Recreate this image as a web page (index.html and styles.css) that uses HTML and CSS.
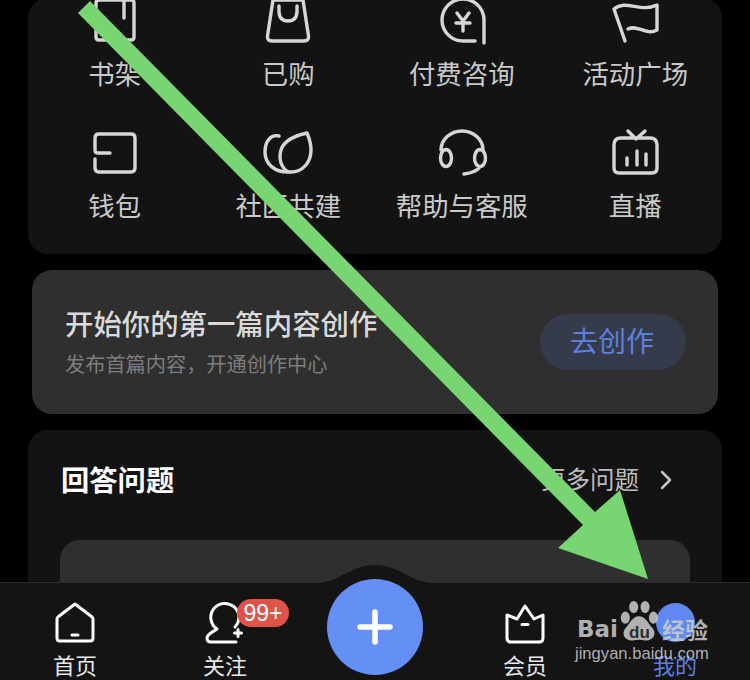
FILE: index.html
```html
<!DOCTYPE html>
<html lang="zh-CN">
<head>
  <meta charset="UTF-8" />
  <title>我的</title>
  <link rel="stylesheet" href="styles.css">
</head>
<body>
  <div class="screen">
    <div class="content">

      <!-- 常用功能 -->
      <section class="card tools">
        <div class="tool">
          <svg class="icon" viewBox="0 0 50 44"><path d="M33 2H9Q6 2 6 5V39Q6 42 9 42H41Q44 42 44 39V5Q44 2 41 2H34M34 3V20"/></svg>
          <span>书架</span>
        </div>
        <div class="tool">
          <svg class="icon" viewBox="0 0 50 44"><path d="M10 2H40L45.500 38Q46 43 41 43H9Q4 43 4.500 38ZM16 8V13Q16 23 25 23Q34 23 34 13V8"/></svg>
          <span>已购</span>
        </div>
        <div class="tool">
          <svg class="icon" viewBox="0 0 50 44"><path d="M38 43H26A21 21 0 1 1 47 22V45M20 15L26 23L32 15M19 25H33M26 23V33"/></svg>
          <span>付费咨询</span>
        </div>
        <div class="tool">
          <svg class="icon" viewBox="0 0 50 44"><path d="M15 43L4 11C16 1 30 15 47 7V32C36 38 28 26 18 31"/></svg>
          <span>活动广场</span>
        </div>
        <div class="tool">
          <svg class="icon" viewBox="0 0 50 44"><path d="M20 23H8Q5 23 5 20V8Q5 4 9 4H41Q45 4 45 8V38Q45 42 41 42H9Q5 42 5 38V29"/></svg>
          <span>钱包</span>
        </div>
        <div class="tool">
          <svg class="icon" viewBox="0 0 50 44"><path d="M16 6C8 4 2 11 2 22C2 34 12 43 27 42M44 3C30 6 17 12 17 26C17 35 22 42 28 42C40 42 48 32 48 20C48 12 46 8 44 3Z"/></svg>
          <span>社区共建</span>
        </div>
        <div class="tool">
          <svg class="icon" viewBox="0 0 50 44"><path d="M4 20A21 19 0 0 1 46 20M9 19.500A5.500 8.500 0 0 0 9 36.500A5.500 8.500 0 0 0 9 19.500ZM43 19.500A5.500 8.500 0 0 0 43 36.500A5.500 8.500 0 0 0 43 19.500ZM43 37C40 41 35 43 27 44"/></svg>
          <span>帮助与客服</span>
        </div>
        <div class="tool">
          <svg class="icon" viewBox="0 0 50 44"><path d="M18 1L26 9L35 1M11 8H40Q47 8 47 15V38Q47 43 42 43H9Q4 43 4 38V15Q4 8 11 8ZM17 28V35M27 21V35M36 24V35"/></svg>
          <span>直播</span>
        </div>
      </section>

      <!-- 创作引导 -->
      <section class="banner">
        <div class="banner-text">
          <h3>开始你的第一篇内容创作</h3>
          <p>发布首篇内容，开通创作中心</p>
        </div>
        <button class="go-btn">去创作</button>
      </section>

      <!-- 回答问题 -->
      <section class="card answers">
        <div class="answers-head">
          <h2>回答问题</h2>
          <div class="more">
            <span>更多问题</span>
            <svg class="chevron" viewBox="0 0 12 20"><path d="M2 2L10 10L2 18"/></svg>
          </div>
        </div>
        <div class="question"></div>
      </section>
    </div>

    <!-- 底部导航 -->
    <nav class="tabbar">
      <svg class="tab-bump" viewBox="0 0 120 18"><path d="M0 18C25 18 35 0 60 0C85 0 95 18 120 18Z"/></svg>
      <div class="tab">
        <svg class="tab-icon" viewBox="0 0 44 44"><path d="M22 4L38.500 16.500Q40 17.500 40 19V38Q40 41 37 41H7Q4 41 4 38V19Q4 17.500 5.500 16.500ZM19 35H25"/></svg>
        <span>首页</span>
      </div>
      <div class="tab">
        <svg class="tab-icon" viewBox="0 0 44 44"><path d="M14 29A14 14 0 1 1 32 27M14 29C10 32 4 34 4 38Q4 42 8 42H33M35 29.500V36.500M31.500 33H38.500"/></svg>
        <span class="badge">99+</span>
        <span>关注</span>
      </div>
      <div class="tab tab-add">
        <div class="fab">
          <svg viewBox="0 0 36 36"><path d="M18 3V33M3 18H33"/></svg>
        </div>
      </div>
      <div class="tab">
        <svg class="tab-icon" viewBox="0 0 44 44"><path d="M4 15L14 19L22 6L31 19L40 15V38Q40 42 36 42H8Q4 42 4 38ZM19 24.500H25"/></svg>
        <span>会员</span>
      </div>
      <div class="tab tab-active">
        <div class="me-dot"></div>
        <span>我的</span>
      </div>
    </nav>

    <!-- 标注箭头 -->
    <svg class="arrow" viewBox="0 0 750 680"><polygon points="90,1 595,512 620,490 648,579 558,548 583,525 78,13"/></svg>

    <!-- 水印 -->
    <div class="watermark">
      <div class="wm-logo">
        <span class="wm-bai">Bai</span>
        <svg class="wm-paw" viewBox="0 0 50 54">
          <ellipse cx="7" cy="22" rx="6" ry="8"/>
          <ellipse cx="18" cy="8" rx="6" ry="8"/>
          <ellipse cx="33" cy="8" rx="6" ry="8"/>
          <ellipse cx="44" cy="22" rx="6" ry="8"/>
          <path d="M25 20C34 20 37 30 43 36C49 44 43 53 33 52Q25 50 17 52C7 53 1 44 7 36C13 30 16 20 25 20Z"/>
        </svg>
        <span class="wm-du">du</span>
        <span class="wm-jy">经验</span>
      </div>
      <div class="wm-url">jingyan.baidu.com</div>
    </div>
  </div>
</body>
</html>
```

FILE: styles.css
```css
* {
  box-sizing: border-box;
}

body {
  margin: 0;
  background: #000;
  font-family: "Noto Sans CJK SC", "Liberation Sans", sans-serif;
}

.screen {
  position: relative;
  width: 750px;
  height: 680px;
  display: flex;
  flex-direction: column;
  overflow: hidden;
}

.content {
  flex: 1;
  min-height: 0;
  overflow: hidden;
  padding: 0 28px;
}

.card {
  background: #131313;
  border-radius: 20px;
}

/* tools */
.tools {
  margin-top: -2px;
  padding-bottom: 29px;
  display: grid;
  grid-template-columns: repeat(4, 1fr);
  row-gap: 37px;
}

.tool {
  display: flex;
  flex-direction: column;
  align-items: center;
  gap: 11px;
  color: #c9c9c9;
  font-size: 26.400px;
  line-height: 40px;
}

.icon {
  width: 50px;
  height: 44px;
  overflow: visible;
  fill: none;
  stroke: #d6d6d6;
  stroke-width: 3.400;
  stroke-linecap: round;
  stroke-linejoin: round;
}

/* banner */
.banner {
  margin: 16px 4px;
  height: 144px;
  padding: 0 32px;
  background: #2f2f2f;
  border-radius: 20px;
  display: flex;
  align-items: center;
  justify-content: space-between;
}

.banner-text {
  padding: 0 0 2px 1px;
}

.banner h3 {
  margin: 0 0 8px;
  color: #d9d9d9;
  font-size: 28.400px;
  font-weight: 500;
  line-height: 38px;
}

.banner p {
  margin: 0;
  color: #7d7d7d;
  font-size: 20.200px;
  line-height: 28px;
}

.go-btn {
  width: 146px;
  height: 56px;
  padding: 0 2px 4px 0;
  border: none;
  border-radius: 28px;
  background: #363b4b;
  color: #5b80e0;
  font-family: inherit;
  font-size: 28px;
}

/* answers */
.answers {
  height: 300px;
  padding: 30px 32px 0;
}

.answers-head {
  height: 40px;
  display: flex;
  align-items: center;
  justify-content: space-between;
}

.answers-head h2 {
  margin: 0 0 0 1px;
  padding-bottom: 4px;
  color: #fff;
  font-size: 28.300px;
  font-weight: 700;
}

.more {
  display: flex;
  align-items: center;
  gap: 21px;
  padding-right: 18px;
  color: #bdbdbd;
  font-size: 24.500px;
}

.more span {
  padding-bottom: 4px;
}

.chevron {
  width: 12px;
  height: 20px;
  fill: none;
  stroke: #c4c4c4;
  stroke-width: 2.500;
  stroke-linecap: round;
  stroke-linejoin: round;
}

.question {
  margin-top: 40px;
  height: 120px;
  background: #2f2f2f;
  border-radius: 20px;
}

/* tab bar */
.tabbar {
  position: relative;
  flex: none;
  height: 98px;
  background: #141414;
  border-top: 1px solid #2c2c2c;
  display: grid;
  grid-template-columns: repeat(5, 1fr);
}

.tab-bump {
  position: absolute;
  left: 315px;
  top: -18px;
  width: 120px;
  height: 18px;
  fill: #141414;
}

.tab {
  position: relative;
  display: flex;
  flex-direction: column;
  align-items: center;
  padding-top: 17px;
  gap: 6px;
  color: #e8e8e8;
  font-size: 22px;
  line-height: 28px;
}

.tab-icon {
  width: 44px;
  height: 44px;
  fill: none;
  stroke: #fff;
  stroke-width: 3;
  stroke-linecap: round;
  stroke-linejoin: round;
}

.badge {
  position: absolute;
  left: 87px;
  top: 16px;
  width: 52px;
  height: 28px;
  border-radius: 14px;
  background: #df5349;
  color: #fff;
  font-family: "Liberation Sans", sans-serif;
  font-size: 23px;
  line-height: 28px;
  text-align: center;
}

.tab-add {
  padding-top: 0;
}

.fab {
  width: 96px;
  height: 96px;
  margin-top: -4px;
  border-radius: 50%;
  background: #6490f5;
  display: flex;
  align-items: center;
  justify-content: center;
}

.fab svg {
  width: 36px;
  height: 36px;
  fill: none;
  stroke: #fff;
  stroke-width: 5.500;
  stroke-linecap: round;
}

.tab-active {
  color: #5b80e0;
}

.me-dot {
  width: 39px;
  height: 39px;
  margin: 3px 0 2px;
  border-radius: 50%;
  background: #5f89f0;
}

/* overlays */
.arrow {
  position: absolute;
  left: 0;
  top: 0;
  width: 750px;
  height: 680px;
  fill: #78d672;
  pointer-events: none;
}

.watermark {
  position: absolute;
  left: 575px;
  top: 598px;
  width: 140px;
  color: rgba(205, 205, 205, 0.85);
}

.wm-logo {
  position: relative;
  height: 45px;
}

.wm-bai {
  position: absolute;
  left: 2px;
  top: 18px;
  font-family: "DejaVu Sans", sans-serif;
  font-size: 23px;
  font-weight: 700;
  line-height: 26px;
}

.wm-paw {
  position: absolute;
  left: 45px;
  top: 2px;
  width: 38px;
  height: 43px;
  fill: rgba(205, 205, 205, 0.85);
}

.wm-du {
  position: absolute;
  left: 54px;
  top: 25px;
  color: #2d2d2d;
  font-family: "Liberation Sans", sans-serif;
  font-size: 17px;
  font-weight: 700;
  line-height: 20px;
}

.wm-jy {
  position: absolute;
  left: 87px;
  top: 16px;
  font-size: 23px;
  font-weight: 700;
  line-height: 30px;
}

.wm-url {
  font-family: "Liberation Sans", sans-serif;
  font-size: 16.600px;
  line-height: 22px;
  white-space: nowrap;
}
```
